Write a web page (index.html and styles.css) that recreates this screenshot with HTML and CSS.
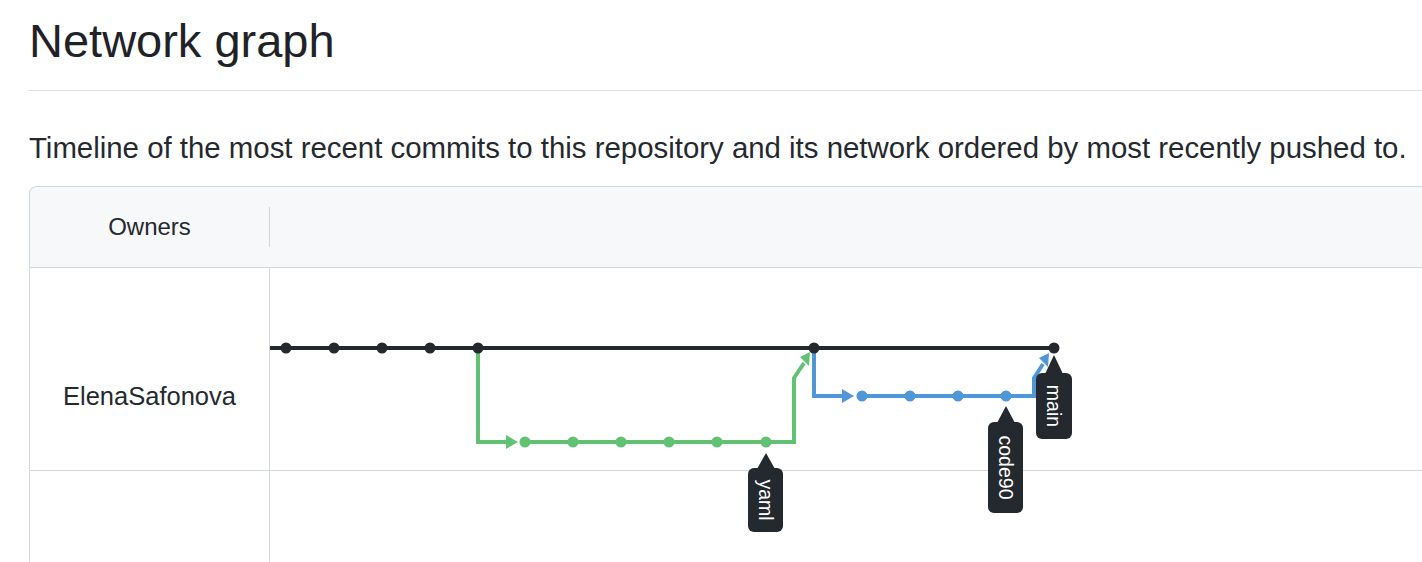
FILE: index.html
```html
<!DOCTYPE html>
<html lang="en">

<head>
    <meta charset="utf8">
    <title>Network graph</title>

    <link rel="stylesheet" href="styles.css">
</head>

<body>
    <div class="page">
        <div class="subhead">
            <h1>Network graph</h1>
        </div>

        <p class="lead">Timeline of the most recent commits to this repository and its network ordered by most recently pushed to.</p>

        <div class="network">
            <div class="network-head">
                <div class="owners-title">Owners</div>
                <div class="head-graph"></div>
            </div>

            <div class="network-body">
                <div class="row">
                    <div class="owner owner-name">ElenaSafonova</div>
                    <div class="lane"></div>
                </div>
                <div class="row row-empty">
                    <div class="owner"></div>
                    <div class="lane"></div>
                </div>

                <svg class="graph" width="1160" height="290" viewBox="0 0 1160 290">
                    <!-- green branch: yaml -->
                    <g class="branch-green">
                        <path d="M208 80 V174 H240 M255 174 H524 V110 L534 95" />
                        <polygon points="236,167 248,174 236,181" />
                        <polygon points="530,89 540,84 539,98" />
                        <circle cx="255" cy="174" r="5.5" />
                        <circle cx="303" cy="174" r="5.5" />
                        <circle cx="351" cy="174" r="5.5" />
                        <circle cx="399" cy="174" r="5.5" />
                        <circle cx="447" cy="174" r="5.5" />
                        <circle cx="496" cy="174" r="5.5" />
                    </g>

                    <!-- blue branch: code90 -->
                    <g class="branch-blue">
                        <path d="M544 80 V128 H576 M592 128 H764 V110 L773 96" />
                        <polygon points="572,121 584,128 572,135" />
                        <polygon points="769,90 779,85 778,99" />
                        <circle cx="592" cy="128" r="5.5" />
                        <circle cx="640" cy="128" r="5.5" />
                        <circle cx="688" cy="128" r="5.5" />
                        <circle cx="736" cy="128" r="5.5" />
                    </g>

                    <!-- main line -->
                    <g class="branch-main">
                        <path d="M0 80 H784" />
                        <circle cx="16" cy="80" r="5.5" />
                        <circle cx="64" cy="80" r="5.5" />
                        <circle cx="112" cy="80" r="5.5" />
                        <circle cx="160" cy="80" r="5.5" />
                        <circle cx="208" cy="80" r="5.5" />
                        <circle cx="544" cy="80" r="5.5" />
                        <circle cx="784" cy="80" r="5.5" />
                    </g>

                    <!-- ref labels -->
                    <g class="ref">
                        <polygon points="496,185 487,201 505,201" />
                        <rect x="478" y="200" width="35" height="64" rx="6" />
                        <text transform="translate(496 232) rotate(90)">yaml</text>
                    </g>
                    <g class="ref">
                        <polygon points="736,138 727,155 745,155" />
                        <rect x="718" y="154" width="35" height="91" rx="6" />
                        <text transform="translate(736 199.5) rotate(90)">code90</text>
                    </g>
                    <g class="ref">
                        <polygon points="784,87 775,106 793,106" />
                        <rect x="766" y="105" width="36" height="66" rx="6" />
                        <text transform="translate(784 138) rotate(90)">main</text>
                    </g>
                </svg>
            </div>
        </div>
    </div>
</body>

</html>
```

FILE: styles.css
```css
* {
    box-sizing: border-box;
}

body {
    margin: 0;
    font-family: "Liberation Sans", Arial, sans-serif;
    color: #24292f;
    background: #ffffff;
    overflow: hidden;
}

.page {
    padding-left: 29px;
    width: 1460px;
}

.subhead {
    padding-top: 12px;
    padding-bottom: 20px;
    border-bottom: 1px solid #d8dee4;
}

.subhead h1 {
    margin: 0;
    font-size: 47px;
    font-weight: 400;
    line-height: 58px;
    color: #1f2328;
}

.lead {
    margin: 37px 0 19px 0;
    font-size: 29.4px;
    line-height: 39px;
}

div.network {
    border: 1px solid #d0d7de;
    border-right: 0 none;
    border-radius: 8px 0 0 0;
    width: 1420px;
}

div.network div.network-head {
    display: flex;
    align-items: center;
    height: 81px;
    background-color: #f6f8fa;
    border-bottom: 1px solid #d0d7de;
    border-radius: 8px 0 0 0;
}

div.network div.owners-title {
    width: 240px;
    height: 40px;
    display: flex;
    justify-content: center;
    align-items: center;
    font-size: 24px;
    border-right: 1px solid #d0d7de;
}

div.network div.network-body {
    position: relative;
}

div.network div.row {
    display: flex;
    height: 203px;
    border-bottom: 1px solid #d0d7de;
}

div.network div.row.row-empty {
    height: 91px;
    border-bottom: 0 none;
}

div.network div.owner {
    width: 240px;
    border-right: 1px solid #d0d7de;
    text-align: center;
    font-size: 25.5px;
}

div.network div.owner-name {
    padding-top: 114px;
}

div.network div.lane {
    flex-grow: 1;
}

svg.graph {
    position: absolute;
    left: 240px;
    top: 0;
}

svg.graph path {
    fill: none;
    stroke-width: 4;
}

.branch-main path {
    stroke: #24292f;
}

.branch-main circle {
    fill: #24292f;
}

.branch-green path {
    stroke: #63c174;
}

.branch-green circle,
.branch-green polygon {
    fill: #63c174;
}

.branch-blue path {
    stroke: #4f97d7;
}

.branch-blue circle,
.branch-blue polygon {
    fill: #4f97d7;
}

.ref rect,
.ref polygon {
    fill: #24292f;
}

.ref text {
    fill: #ffffff;
    font-family: "Liberation Sans", Arial, sans-serif;
    font-size: 19.5px;
    text-anchor: middle;
    dominant-baseline: central;
}
```
